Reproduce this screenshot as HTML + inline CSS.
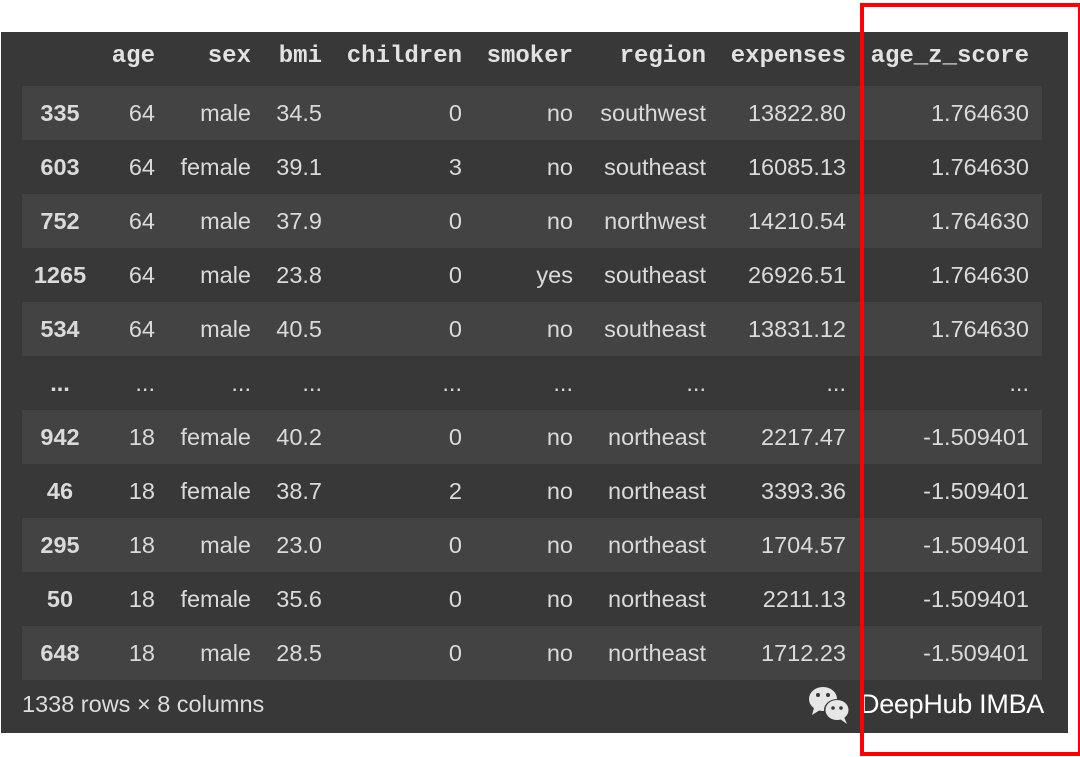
<!DOCTYPE html>
<html><head><style>
body{margin:0;width:1080px;height:757px;background:#fff;position:relative;overflow:hidden;font-family:"Liberation Sans",sans-serif}
#p{position:absolute;left:1px;top:32px;width:1067px;height:701px;background:#383838}
.r{position:absolute;left:22px;width:1020px;height:54px}
.s{background:#434343}
.c{position:absolute;top:0;line-height:54px;font-size:23.5px;color:#dadada;text-align:right;white-space:nowrap}
.h .c{font-family:"Liberation Mono",monospace;font-weight:bold;font-size:24px;color:#e2e2e2}
.i{font-weight:bold;text-align:center!important}
#red{position:absolute;left:860px;top:3px;width:214px;height:745px;border:4px solid #f00}
</style></head><body>
<div id="p"></div>
<div id="rows"></div>
<div style="position:absolute;left:22px;top:691px;font-size:23.5px;color:#ddd">1338 rows × 8 columns</div>
<svg style="position:absolute;left:806px;top:683px" width="48" height="44" viewBox="0 0 48 44"><ellipse cx="17" cy="16" rx="14" ry="12" fill="#e6e6e6"/><path d="M8 25 L6 32 L14 27Z" fill="#e6e6e6"/><circle cx="12" cy="12" r="2" fill="#383838"/><circle cx="22" cy="12" r="2" fill="#383838"/><ellipse cx="31" cy="27" rx="13" ry="11" fill="#383838"/><ellipse cx="31" cy="27" rx="11.5" ry="10" fill="#e6e6e6"/><path d="M38 34 L41 41 L34 36Z" fill="#e6e6e6"/><circle cx="27" cy="25" r="1.8" fill="#383838"/><circle cx="35" cy="25" r="1.8" fill="#383838"/></svg>
<div style="position:absolute;left:860px;top:689px;font-size:27px;color:#fff;letter-spacing:-0.3px">DeepHub IMBA</div>
<div id="red"></div>
<script>
const R=[155,251,322,462,573,706,846,1029];
const H=["age","sex","bmi","children","smoker","region","expenses","age_z_score"];
const D=[["335","64","male","34.5","0","no","southwest","13822.80","1.764630"],
["603","64","female","39.1","3","no","southeast","16085.13","1.764630"],
["752","64","male","37.9","0","no","northwest","14210.54","1.764630"],
["1265","64","male","23.8","0","yes","southeast","26926.51","1.764630"],
["534","64","male","40.5","0","no","southeast","13831.12","1.764630"],
["...","...","...","...","...","...","...","...","..."],
["942","18","female","40.2","0","no","northeast","2217.47","-1.509401"],
["46","18","female","38.7","2","no","northeast","3393.36","-1.509401"],
["295","18","male","23.0","0","no","northeast","1704.57","-1.509401"],
["50","18","female","35.6","0","no","northeast","2211.13","-1.509401"],
["648","18","male","28.5","0","no","northeast","1712.23","-1.509401"]];
let h='<div class="r h" style="top:30px">';
H.forEach((t,j)=>h+=`<div class="c" style="right:${1042-R[j]}px">${t}</div>`);
h+='</div>';
D.forEach((r,i)=>{h+=`<div class="r${i%2==0?' s':''}" style="top:${86+i*54}px"><div class="c i" style="left:0;width:76px">${r[0]}</div>`;
for(let j=1;j<9;j++)h+=`<div class="c" style="right:${1042-R[j-1]}px">${r[j]}</div>`;h+='</div>';});
document.getElementById('rows').innerHTML=h;
</script>
</body></html>
